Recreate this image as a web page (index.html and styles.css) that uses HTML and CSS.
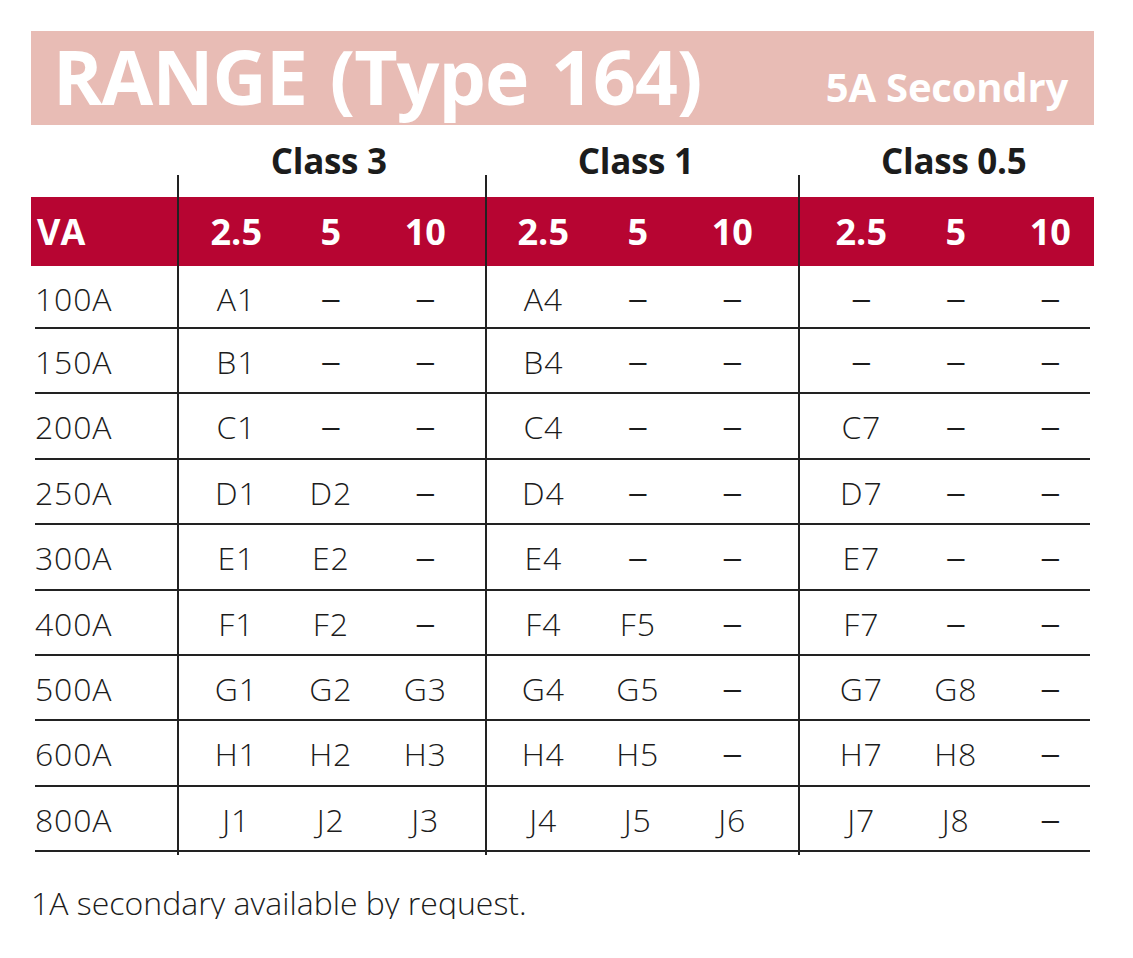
FILE: index.html
```html
<!DOCTYPE html>
<html lang="en">
<head>
<meta charset="utf-8">
<title>RANGE (Type 164)</title>
<link rel="stylesheet" href="styles.css">
</head>
<body>
<div class="sheet">
  <header class="banner">
    <h1 class="title">RANGE (Type 164)</h1>
    <span class="subtitle">5A Secondry</span>
  </header>

  <div class="grid classes">
    <div class="label"></div>
    <div class="grp g1"><span class="span3">Class 3</span></div>
    <div class="grp g2"><span class="span3">Class 1</span></div>
    <div class="grp g3"><span class="span3">Class 0.5</span></div>
  </div>

  <div class="grid va">
    <div class="label">VA</div>
    <div class="grp g1"><span>2.5</span><span>5</span><span>10</span></div>
    <div class="grp g2"><span>2.5</span><span>5</span><span>10</span></div>
    <div class="grp g3"><span>2.5</span><span>5</span><span>10</span></div>
  </div>

  <div class="rows">
    <div class="grid row">
      <div class="label">100A</div>
      <div class="grp g1"><span>A1</span><span class="nil">–</span><span class="nil">–</span></div>
      <div class="grp g2"><span>A4</span><span class="nil">–</span><span class="nil">–</span></div>
      <div class="grp g3"><span class="nil">–</span><span class="nil">–</span><span class="nil">–</span></div>
    </div>
    <div class="grid row">
      <div class="label">150A</div>
      <div class="grp g1"><span>B1</span><span class="nil">–</span><span class="nil">–</span></div>
      <div class="grp g2"><span>B4</span><span class="nil">–</span><span class="nil">–</span></div>
      <div class="grp g3"><span class="nil">–</span><span class="nil">–</span><span class="nil">–</span></div>
    </div>
    <div class="grid row">
      <div class="label">200A</div>
      <div class="grp g1"><span>C1</span><span class="nil">–</span><span class="nil">–</span></div>
      <div class="grp g2"><span>C4</span><span class="nil">–</span><span class="nil">–</span></div>
      <div class="grp g3"><span>C7</span><span class="nil">–</span><span class="nil">–</span></div>
    </div>
    <div class="grid row">
      <div class="label">250A</div>
      <div class="grp g1"><span>D1</span><span>D2</span><span class="nil">–</span></div>
      <div class="grp g2"><span>D4</span><span class="nil">–</span><span class="nil">–</span></div>
      <div class="grp g3"><span>D7</span><span class="nil">–</span><span class="nil">–</span></div>
    </div>
    <div class="grid row">
      <div class="label">300A</div>
      <div class="grp g1"><span>E1</span><span>E2</span><span class="nil">–</span></div>
      <div class="grp g2"><span>E4</span><span class="nil">–</span><span class="nil">–</span></div>
      <div class="grp g3"><span>E7</span><span class="nil">–</span><span class="nil">–</span></div>
    </div>
    <div class="grid row">
      <div class="label">400A</div>
      <div class="grp g1"><span>F1</span><span>F2</span><span class="nil">–</span></div>
      <div class="grp g2"><span>F4</span><span>F5</span><span class="nil">–</span></div>
      <div class="grp g3"><span>F7</span><span class="nil">–</span><span class="nil">–</span></div>
    </div>
    <div class="grid row">
      <div class="label">500A</div>
      <div class="grp g1"><span>G1</span><span>G2</span><span>G3</span></div>
      <div class="grp g2"><span>G4</span><span>G5</span><span class="nil">–</span></div>
      <div class="grp g3"><span>G7</span><span>G8</span><span class="nil">–</span></div>
    </div>
    <div class="grid row">
      <div class="label">600A</div>
      <div class="grp g1"><span>H1</span><span>H2</span><span>H3</span></div>
      <div class="grp g2"><span>H4</span><span>H5</span><span class="nil">–</span></div>
      <div class="grp g3"><span>H7</span><span>H8</span><span class="nil">–</span></div>
    </div>
    <div class="grid row">
      <div class="label">800A</div>
      <div class="grp g1"><span>J1</span><span>J2</span><span>J3</span></div>
      <div class="grp g2"><span>J4</span><span>J5</span><span>J6</span></div>
      <div class="grp g3"><span>J7</span><span>J8</span><span class="nil">–</span></div>
    </div>
  </div>

  <p class="note">1A secondary available by request.</p>
</div>
</body>
</html>
```

FILE: styles.css
```css
* { box-sizing: border-box; }

html, body {
  margin: 0;
  padding: 0;
  background: #ffffff;
}

body {
  font-family: "Open Sans", "Noto Sans", "Liberation Sans", sans-serif;
  color: #1c1c1c;
}

.sheet {
  width: 1063px;
  margin: 31px 0 0 31px;
}

/* ---------- banner ---------- */
.banner {
  height: 94px;
  background: #e8bcb5;
  display: flex;
  justify-content: space-between;
  align-items: flex-start;
  padding: 8px 26px 0 22px;
  color: #ffffff;
}

.title {
  margin: 0;
  font-size: 75px;
  font-weight: 700;
  line-height: 1;
  letter-spacing: -0.9px;
  word-spacing: 4px;
}

.subtitle {
  margin-top: 28px;
  font-size: 40px;
  font-weight: 700;
  line-height: 1;
  letter-spacing: -0.2px;
}

/* ---------- shared grid ---------- */
.grid {
  display: grid;
  grid-template-columns: 146px 308px 313px 296px;
}

.grp {
  display: flex;
  border-left: 2px solid #222;
}

.grp > span {
  flex: 0 0 94.5px;
  text-align: center;
  white-space: nowrap;
}

.g1 { padding-left: 10px; }
.g2 { padding-left: 9px; }
.g3 { padding-left: 14px; }

.grp > .span3 { flex: 0 0 283.5px; }

/* ---------- class heading ---------- */
.classes {
  height: 72px;
  padding-top: 18px;
  font-size: 35px;
  font-weight: 700;
  line-height: 1;
  letter-spacing: -0.3px;
}

.classes .grp {
  border-left: 0;
  margin-top: -18px;
  padding-top: 18px;
  background: linear-gradient(#222, #222) no-repeat left bottom / 2px 22px;
}

/* ---------- VA band ---------- */
.va {
  height: 69px;
  background: #b70532;
  color: #ffffff;
  font-size: 36px;
  font-weight: 700;
  line-height: 69px;
}

.va .label { padding-left: 6px; }

/* ---------- data rows ---------- */
.rows {
  margin: 0 4px;
}

.rows .grid {
  grid-template-columns: 142px 308px 313px 292px;
}

.row {
  height: 65.4px;
  border-bottom: 2px solid #222;
  font-size: 32px;
  font-weight: 350;
  line-height: 63px;
  letter-spacing: 0.8px;
  padding-top: 1px;
}

.row:first-child {
  height: 63px;
}

.row .grp {
  margin-top: -1px;
  padding-top: 1px;
}

.row:last-child .grp {
  margin-bottom: -4px;
}

.row .label {
  padding-left: 0;
}

.grp > .nil {
  font-family: "Liberation Sans", "Open Sans", sans-serif;
  font-size: 31px;
  letter-spacing: 0;
}

/* ---------- footnote ---------- */
.note {
  margin: 35px 0 0 0;
  font-size: 32px;
  font-weight: 350;
  line-height: 1;
  letter-spacing: 0;
}
```
